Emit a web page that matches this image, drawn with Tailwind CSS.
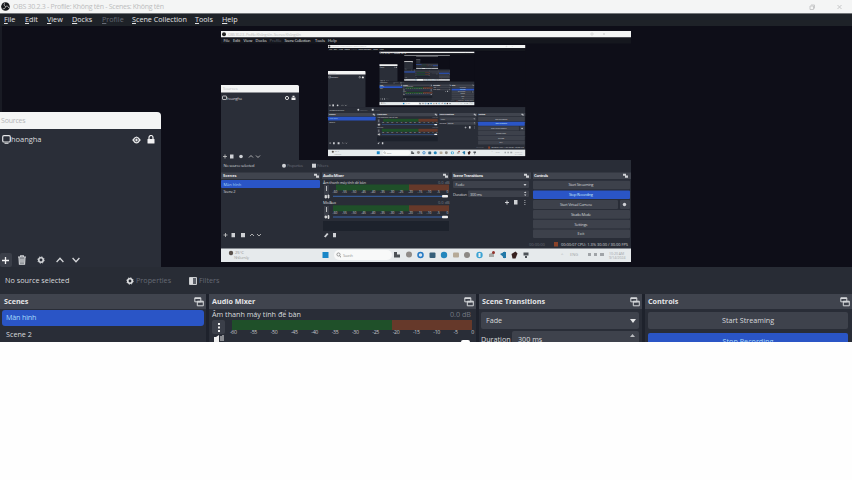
<!DOCTYPE html>
<html lang="en">
<head>
<meta charset="utf-8">
<title>OBS</title>
<script src="https://cdn.jsdelivr.net/npm/@tailwindcss/browser@4"></script>
</head>
<body class="w-[852px] h-[480px] overflow-hidden bg-[#fefefe] font-['Open_Sans','Noto_Sans',sans-serif] text-[7.2px] leading-none text-[#d8dadd]">
<svg class="hidden">
  <symbol id="dock" viewBox="0 0 10 10"><path d="M.8.8h6v4h-6zM3.3 4.2h6v4.6h-6z" fill="#3e424c" stroke="#d5d7da" stroke-width="1"/><path d="M.8 1.4h6M3.3 4.9h6" stroke="#d5d7da" stroke-width="1.3"/></symbol>
  <symbol id="gear" viewBox="0 0 10 10"><circle cx="5" cy="5" r="2.8" fill="none" stroke="currentColor" stroke-width="2"/><circle cx="5" cy="5" r="4" fill="none" stroke="currentColor" stroke-width="1.2" stroke-dasharray="1.57 1.57"/></symbol>
  <symbol id="trash" viewBox="0 0 10 10"><path d="M2 2.500h6L7.600 9.200H2.400z" fill="#7d8087"/><path d="M1 2h8M3.6 1.8V.8h2.8v1M2 2.5l.4 6.7h5.2L8 2.5M4 3.8v4M6 3.8v4" fill="none" stroke="currentColor" stroke-width="1.1"/></symbol>
</svg>
<div class="relative w-[852px] h-[342px] overflow-hidden flex flex-col bg-[#252932]">
  <header class="h-[13px] shrink-0 bg-[#f4f5f5] flex items-center pl-px pr-[9px] text-[#bcbdbe]">
    <svg class="w-[9px] h-[9px]" viewBox="0 0 10 10"><circle cx="5" cy="5" r="4.8" fill="#17181b"/><path d="M5 5C3 4 3 2 4.500 1.200M5 5c2-1 3.700 0 3.600 1.700M5 5c0 2-1.500 3-3 2.300" fill="none" stroke="#bbb" stroke-width="1"/></svg>
    <span class="ml-[3px] text-[7px] tracking-[-0.28px] whitespace-nowrap">OBS 30.2.3 - Profile: Không tên - Scenes: Không tên</span>
    <svg class="ml-auto w-[34px] h-[6px]" viewBox="0 0 34 6" fill="none" stroke="#c8c9ca"><path d="M1 2h3.500v3.500H1zM2 1h3.500v3.500M28.500 1l4 4M32.500 1l-4 4"/></svg>
  </header>
  <nav class="h-[13px] shrink-0 bg-[#1e2228] border-t border-[#73767a] flex items-center pl-[4px] text-[7.2px] text-[#e2e3e5] whitespace-nowrap">
    <span class="w-[21px]"><u>F</u>ile</span><span class="w-[22px]"><u>E</u>dit</span><span class="w-[25px]"><u>V</u>iew</span><span class="w-[30px]"><u>D</u>ocks</span><span class="w-[30px] text-[#676b76]"><u>P</u>rofile</span><span class="w-[63px]"><u>S</u>cene Collection</span><span class="w-[27px]"><u>T</u>ools</span><span><u>H</u>elp</span>
  </nav>
  <main class="h-[241px] shrink-0 bg-[#0e0e18] border-l-2 border-[#191b24] pl-[219px] pt-[5px]">
    <svg class="block w-[410px] h-[231px]" viewBox="0 0 410 231" font-size="4" fill="#cfd1d5">
      <defs>
        <g id="ticks" font-size="3.300" text-anchor="middle"><text x="114">-60</text><text x="123.500">-55</text><text x="133">-50</text><text x="142.500">-45</text><text x="152">-40</text><text x="161.500">-35</text><text x="171">-30</text><text x="180">-25</text><text x="189.500">-20</text><text x="199">-15</text><text x="208">-10</text><text x="217.500">-5</text><text x="226.500">0</text></g>
        <g id="screen">
          <rect width="410" height="231" fill="#0e0e18"/>
          <rect width="410" height="6.500" fill="#f3f4f4"/><circle cx="3" cy="3.200" r="2" fill="#222"/>
          <text x="7" y="4.800" fill="#bcbdbe" textLength="73">OBS 30.2.3 - Profile: Không tên - Scenes: Không tên</text>
          <path d="M370 2h2v2h-2zM382 2l2 2m0-2l-2 2" stroke="#ccc" stroke-width=".6" fill="none"/>
          <rect y="6.500" width="410" height="6" fill="#15171e"/>
          <g fill="#e0e1e3"><text x="2.500" y="11.300">File</text><text x="12" y="11.300">Edit</text><text x="22.500" y="11.300">View</text><text x="34.500" y="11.300">Docks</text><text x="48.500" y="11.300" fill="#666a75">Profile</text><text x="63.500" y="11.300" textLength="26">Scene Collection</text><text x="94" y="11.300">Tools</text><text x="107" y="11.300">Help</text></g>
          <rect y="129" width="410" height="89" fill="#292d37"/>
          <path d="M0 61h78v68H0z" fill="#2a2e38"/><path d="M0 54h76.500q1.500 0 1.500 1.500V61.500H0z" fill="#f3f4f4"/>
          <text x="2" y="59.300" fill="#c2c3c4">Sources</text><rect x="1.500" y="65" width="4" height="3.500" rx=".6" fill="none" stroke="#ddd" stroke-width=".8"/><text x="6" y="68.500" textLength="15">hoangha</text>
          <circle cx="66" cy="67" r="1.600" fill="none" stroke="#ddd"/><path d="M70.500 66.500h4V69h-4zM71.500 66v-1.300h2V66" fill="#eee"/>
          <path d="M2 125.500h4m-2-2v4M28 126.500l2-2 2 2M35 124.500l2 2 2-2" stroke="#ccc" stroke-width=".8" fill="none"/><path d="M9 123.500h3.500v4H9z"/><circle cx="20" cy="125.500" r="1.800"/>
          <text x="2.500" y="136.300" textLength="31">No source selected</text><circle cx="63" cy="134.700" r="2"/><text x="66" y="136.300" fill="#6a6e78" textLength="16">Properties</text><path d="M91 132.700h4v4h-4z"/><text x="96" y="136.300" fill="#6a6e78">Filters</text>
          <g fill="#40444e"><path d="M0 141.500h99v6.500H0zM101 141.500h127v6.500H101zM231 141.500h79v6.500H231zM312 141.500h98v6.500H312z"/></g>
          <g font-weight="bold" fill="#e3e4e6"><text x="2" y="146.300">Scenes</text><text x="102" y="146.300" textLength="21">Audio Mixer</text><text x="232" y="146.300" textLength="30">Scene Transitions</text><text x="313" y="146.300" textLength="14">Controls</text></g>
          <path d="M93 142.800h3v2h-3zM95 144.600h3v2.200h-3zM222 142.800h3v2h-3zM224 144.600h3v2.200h-3zM303 142.800h3v2h-3zM305 144.600h3v2.200h-3zM402 142.800h3v2h-3zM404 144.600h3v2.200h-3z"/>
          <rect y="149" width="99" height="8" rx="1" fill="#2a55c6"/><text x="2.500" y="154.500" fill="#a5d7fa">Màn hình</text><text x="2.500" y="162.300" textLength="12">Scene 2</text>
          <path d="M2.500 204h4m-2-2v4M29 205l2-2 2 2M36 203l2 2 2-2" stroke="#ccc" stroke-width=".8" fill="none"/><path d="M10.500 202h3.500v4.200h-3.500zM20 202h4v4.200h-4zM103 205.500l3-3.500 1.500 1-3 3.500zM112 202h3v4.200h-3z"/>
          <g>
            <text x="102" y="152.800" textLength="43" font-size="3.800">Âm thanh máy tính để bàn</text><text x="217" y="152.800" fill="#777b84">0.0 dB</text>
            <rect x="115" y="153.500" width="74" height="6" fill="#1f5029"/><rect x="188" y="153.500" width="40" height="6" fill="#66392a"/>
            <path d="M103 154h5v11h-5z" fill="#3b3f49"/><path d="M105.500 155v5M104 164.500h1.500v2.500H104zM107 164h1v3h-1z" stroke="#ddd" stroke-width=".8"/>
            <use href="#ticks" y="162.300"/>
            <path d="M112 165.300h111" stroke="#3a64aa" stroke-width="1"/><rect x="221" y="164" width="6" height="2.600" rx=".8" fill="#eee"/>
          </g>
          <g><text x="102" y="173" textLength="13">Mic/Aux</text><text x="217" y="173" fill="#777b84">0.0 dB</text><rect x="112" y="174.300" width="77" height="6" fill="#1f5029"/><rect x="188" y="174.300" width="40" height="6" fill="#66392a"/><path d="M103 175h5v11h-5z" fill="#3b3f49"/><path d="M105.500 176v5M104 185h1.500v2H104zM107 184.500h1v3h-1z" stroke="#ddd" stroke-width=".8"/><use href="#ticks" y="183"/><path d="M112 186h111" stroke="#3a64aa"/><rect x="221" y="184.700" width="6" height="2.600" rx=".8" fill="#eee"/></g>
          <rect x="102" y="190" width="126" height="10" fill="#1d222c"/>
          <g fill="#3d414b"><rect x="232" y="150" width="76" height="7" rx="1"/><rect x="247" y="159.500" width="61" height="6.500" rx="1"/><rect x="312" y="149.700" width="97" height="8.500" rx="1"/><rect x="312" y="169" width="85" height="9" rx="1"/><rect x="399" y="169" width="10" height="9" rx="1"/><rect x="312" y="179" width="97" height="8.700" rx="1"/><rect x="312" y="188.700" width="97" height="8.700" rx="1"/><rect x="312" y="198.400" width="97" height="8.700" rx="1"/></g>
          <rect x="312" y="159.500" width="97" height="8.500" rx="1" fill="#2a55c6"/>
          <text x="234.500" y="155">Fade</text><path d="M302.500 153h3l-1.500 2z"/><text x="232" y="164.500" textLength="14">Duration</text><text x="249" y="164.500" textLength="12">300 ms</text><path d="M303 162l1.200-1.500 1.200 1.500zM303 163.500l1.200 1.500 1.200-1.500zM285.500 169.500h1v1.500H288v1h-1.500v1.500h-1V172H284v-1h1.500zM293 169h3.500v4.500H293zM303.500 169h.8v1h-.8zM303.500 171h.8v1h-.8zM303.500 173h.8v1h-.8z"/>
          <g text-anchor="middle"><text x="360" y="155.400" textLength="25">Start Streaming</text><text x="360" y="165.200" fill="#c4e4fa" textLength="24">Stop Recording</text><text x="355" y="175" textLength="32">Start Virtual Camera</text><text x="360" y="184.700" textLength="20">Studio Mode</text><text x="360" y="194.500" textLength="13">Settings</text><text x="360" y="204">Exit</text></g><circle cx="403.500" cy="173.500" r="1.700"/>
          <rect x="333" y="211" width="4" height="4.500" fill="#8a4229"/><text x="308" y="214.800" fill="#666a73">00:00:00</text><text x="340" y="214.800" textLength="67">00:00:07  CPU: 1.3%  30.00 / 30.00 FPS</text>
          <rect y="217.500" width="410" height="13.500" fill="#e6eaec"/>
          <circle cx="10" cy="222" r="2.200" fill="#59514b"/><text x="14" y="223" fill="#888">25°C</text><text x="13" y="227.700" fill="#aaa" textLength="15">Nhiều mây</text>
          <path d="M101.500 221h6v6h-6z" fill="#1886c7"/><rect x="113" y="219" width="58" height="10" rx="5" fill="#f8f9f9"/><circle cx="117.500" cy="223.500" r="1.600" fill="none" stroke="#777" stroke-width=".7"/><path d="M118.700 225l1.200 1.200" stroke="#777"/><text x="122" y="226" fill="#999" textLength="10">Search</text>
          <path d="M173 221h3v2.500h3v3h-6z" fill="#4b5055"/><circle cx="188" cy="223.500" r="3" fill="#8f8b88"/><circle cx="199.500" cy="224" r="2.500" fill="#d7e5ef" stroke="#2479c4" stroke-width="1.500"/><rect x="208.500" y="221.500" width="6" height="5.500" rx="1" fill="#355e79"/><circle cx="223" cy="224" r="3.200" fill="#2386bd"/><rect x="232" y="221.500" width="6" height="5" rx="1" fill="#b6aa98"/><circle cx="246" cy="224" r="3" fill="#8c8985"/><circle cx="258.500" cy="224" r="3.200" fill="#3ba3d4"/><path d="M257.500 222h2v4h-2z" fill="#eee"/><path d="M268 223l5-2v5h-5z" fill="#a9aaa7"/><circle cx="272.500" cy="221.500" r="1.500" fill="#92332c"/><path d="M279 223l5-2.500v7zM282 221h3v6h-3z" fill="#2479a8"/><path d="M290.500 223l4-2.500 2 2-2 5h-3z" fill="#37211f"/><path d="M302.500 221.500h5v3h-5zM304 225h2v2h-2z" fill="#4e5358"/>
          <g fill="#a0a4a8"><text x="340" y="225">^</text><text x="349" y="225">ENG</text><path d="M367 222h3v3h-3zM373 222h3v3h-3zM379 222h4v3h-4z"/><text x="388" y="223.500" font-size="3.500">10:20 AM</text><text x="388" y="227.700" font-size="3.500">9/14/2024</text></g>
        </g>
      </defs>
      <use href="#screen"/>
      <g transform="translate(107 14) scale(.481)"><use href="#screen"/>
        <g transform="translate(107 14) scale(.481)"><use href="#screen"/>
          <g transform="translate(107 14) scale(.481)"><use href="#screen"/>
            <g transform="translate(107 14) scale(.481)"><use href="#screen"/></g>
          </g>
        </g>
      </g>
    </svg>
  </main>
  <section class="h-[27px] shrink-0 bg-[#282c35] flex items-center pl-[5px] text-[7.25px] text-[#666a74]">
    <span class="w-[121px] text-[#d8dadd]">No source selected</span>
    <svg class="w-2 h-2 text-[#e1e2e4]"><use href="#gear"/></svg><span class="ml-[2px] w-[53px]">Properties</span>
    <svg class="w-2 h-2" viewBox="0 0 8 8"><path d="M.5.5h7v7h-7z" fill="#5c6069" stroke="#c9cbce"/><path d="M1 1h3v6H1z" fill="#d9dadd"/></svg><span class="ml-[2px]">Filters</span>
  </section>
  <div class="h-[48px] shrink-0 flex gap-[3px] bg-[#1e222c]">
    <section class="w-[206px] bg-[#292d37]">
      <h2 class="h-[15px] bg-[#40444e] flex items-center justify-between pl-[4px] pr-[2px] font-bold text-[#e4e5e7]">Scenes<svg class="w-[10px] h-[10px]"><use href="#dock"/></svg></h2>
      <div class="mx-[2px] mt-px h-[16px] rounded-[3px] bg-[#2a55c6] text-[#a5d7fa] flex items-center pl-[4px] tracking-[-0.2px]">Màn hình</div>
      <div class="h-[16px] flex items-center pl-[6px] pt-[2px]">Scene 2</div>
    </section>
    <section class="w-[267px] bg-[#292d37]">
      <h2 class="h-[15px] bg-[#40444e] flex items-center justify-between pl-[3px] pr-[2px] font-bold text-[#e4e5e7]">Audio Mixer<svg class="w-[10px] h-[10px]"><use href="#dock"/></svg></h2>
      <div class="h-[11px] flex items-center justify-between pl-[3px] pr-[5px]"><span>Âm thanh máy tính để bàn</span><span class="text-[#757983]">0.0 dB</span></div>
      <div class="flex pl-[3px]">
        <svg class="w-[14px] h-[22px]" viewBox="0 0 14 22"><rect width="13" height="14" rx="2" fill="#3b3f49"/><path d="M6 3h2v2H6zM6 6.500h2v2H6zM6 10h2v2H6zM2 17h2l3-2v7H2z" fill="#eee"/><path d="M9 16v5M11 15v6" stroke="#eee"/></svg>
        <div class="ml-[4px] w-[244px]">
          <div class="ml-[2px] w-[240px] h-[10px] flex"><i class="w-[160px] bg-[#1f5029]"></i><i class="w-[80px] bg-[#66392a]"></i></div>
          <div class="h-[6px] flex justify-between text-[5.2px] text-[#c5c7ca] tracking-[-0.3px]"><span>-60</span><span>-55</span><span>-50</span><span>-45</span><span>-40</span><span>-35</span><span>-30</span><span>-25</span><span>-20</span><span>-15</span><span>-10</span><span>-5</span><span>0</span></div>
          <div class="ml-auto mr-[4px] mt-[4px] w-[9px] h-[4px] rounded-[2px] bg-white"></div>
        </div>
      </div>
    </section>
    <section class="w-[163px] bg-[#292d37]">
      <h2 class="h-[15px] bg-[#40444e] flex items-center justify-between pl-[3px] pr-[2px] font-bold text-[#e4e5e7]">Scene Transitions<svg class="w-[10px] h-[10px]"><use href="#dock"/></svg></h2>
      <div class="ml-[2px] mr-[3px] mt-[3px] h-[17px] rounded-[2px] bg-[#3e424c] flex items-center justify-between pl-[5px] pr-[3px]">Fade<svg class="w-[6px] h-[4px]"><path d="M0 0h6L3 4z" fill="#e4e5e7"/></svg></div>
      <div class="mt-[2px] h-[17px] flex items-center pl-[2px]"><span class="w-[31px]">Duration</span><div class="flex-1 mr-[3px] h-[17px] rounded-[2px] bg-[#3e424c] flex justify-between items-center pl-[6px] pr-[4px]">300 ms<svg class="w-[5px] h-[3px] mb-[8px]"><path d="M0 3h5L2.500 0z" fill="#bbbdc1"/></svg></div></div>
    </section>
    <section class="flex-1 bg-[#292d37]">
      <h2 class="h-[15px] bg-[#40444e] flex items-center justify-between pl-[3px] pr-[2px] font-bold text-[#e4e5e7]">Controls<svg class="w-[10px] h-[10px]"><use href="#dock"/></svg></h2>
      <div class="ml-[3px] mr-[4px] mt-[3px] h-[17px] rounded-[2px] bg-[#3e424c] flex items-center justify-center">Start Streaming</div>
      <div class="ml-[3px] mr-[4px] mt-[4px] h-[17px] rounded-[2px] bg-[#2a55c6] text-[#a5d7fa] flex items-center justify-center">Stop Recording</div>
    </section>
  </div>
  <aside class="absolute left-0 top-[112px] w-[161px] h-[155px] flex flex-col bg-[#2a2e38] rounded-tr-[4px] overflow-hidden">
    <div class="h-[17px] shrink-0 bg-[#f4f5f5] text-[#b5b6b8] flex items-center pl-px text-[7px] tracking-[-0.2px]">Sources</div>
    <div class="h-[21px] flex items-center pl-[2px] pr-[6px] text-[7.5px]">
      <svg class="w-[9px] h-[9px]" viewBox="0 0 9 9"><rect x=".7" y=".7" width="7.600" height="6.300" rx="1.300" fill="none" stroke="#e4e5e7" stroke-width="1.200"/><path d="M2.500 8.300h4" stroke="#e4e5e7"/></svg><span class="tracking-[-0.05px]">hoangha</span>
      <svg class="ml-auto w-[9px] h-[8px]" viewBox="0 0 9 8"><path d="M.2 4Q4.500-3 8.800 4 4.500 11 .2 4z" fill="#e8e9ea"/><circle cx="4.500" cy="4" r="1.700" fill="#e8e9ea" stroke="#2a2e38" stroke-width=".9"/></svg>
      <svg class="ml-[6px] w-[8px] h-[9px]" viewBox="0 0 8 9"><rect x=".5" y="4" width="7" height="4.500" rx=".6" fill="#f2f2f3"/><path d="M2 4V2.500a2 2 0 0 1 4 0V4" fill="none" stroke="#f2f2f3" stroke-width="1.200"/></svg>
    </div>
    <div class="mt-auto h-[14px] flex items-center text-[#d4d6d9]">
      <div class="w-[12px] h-[14px] bg-[#3b3f49] rounded-[2px] flex items-center pl-px"><svg class="w-[9px] h-[9px]" viewBox="0 0 9 9"><path d="M4.500 1v7M1 4.500h7" stroke="#f2f2f3" stroke-width="1.300"/></svg></div>
      <svg class="ml-[5px] w-[10px] h-[10px]"><use href="#trash"/></svg>
      <svg class="ml-[10px] w-[8px] h-[8px]"><use href="#gear"/></svg>
      <svg class="ml-[11px] w-[8px] h-[6px]" fill="none" stroke="currentColor" stroke-width="1.300"><path d="M.6 5L4 1.300 7.400 5"/></svg>
      <svg class="ml-[8px] w-[8px] h-[6px]" fill="none" stroke="currentColor" stroke-width="1.300"><path d="M.6 1L4 4.700 7.400 1"/></svg>
    </div>
  </aside>
</div>
</body>
</html>
